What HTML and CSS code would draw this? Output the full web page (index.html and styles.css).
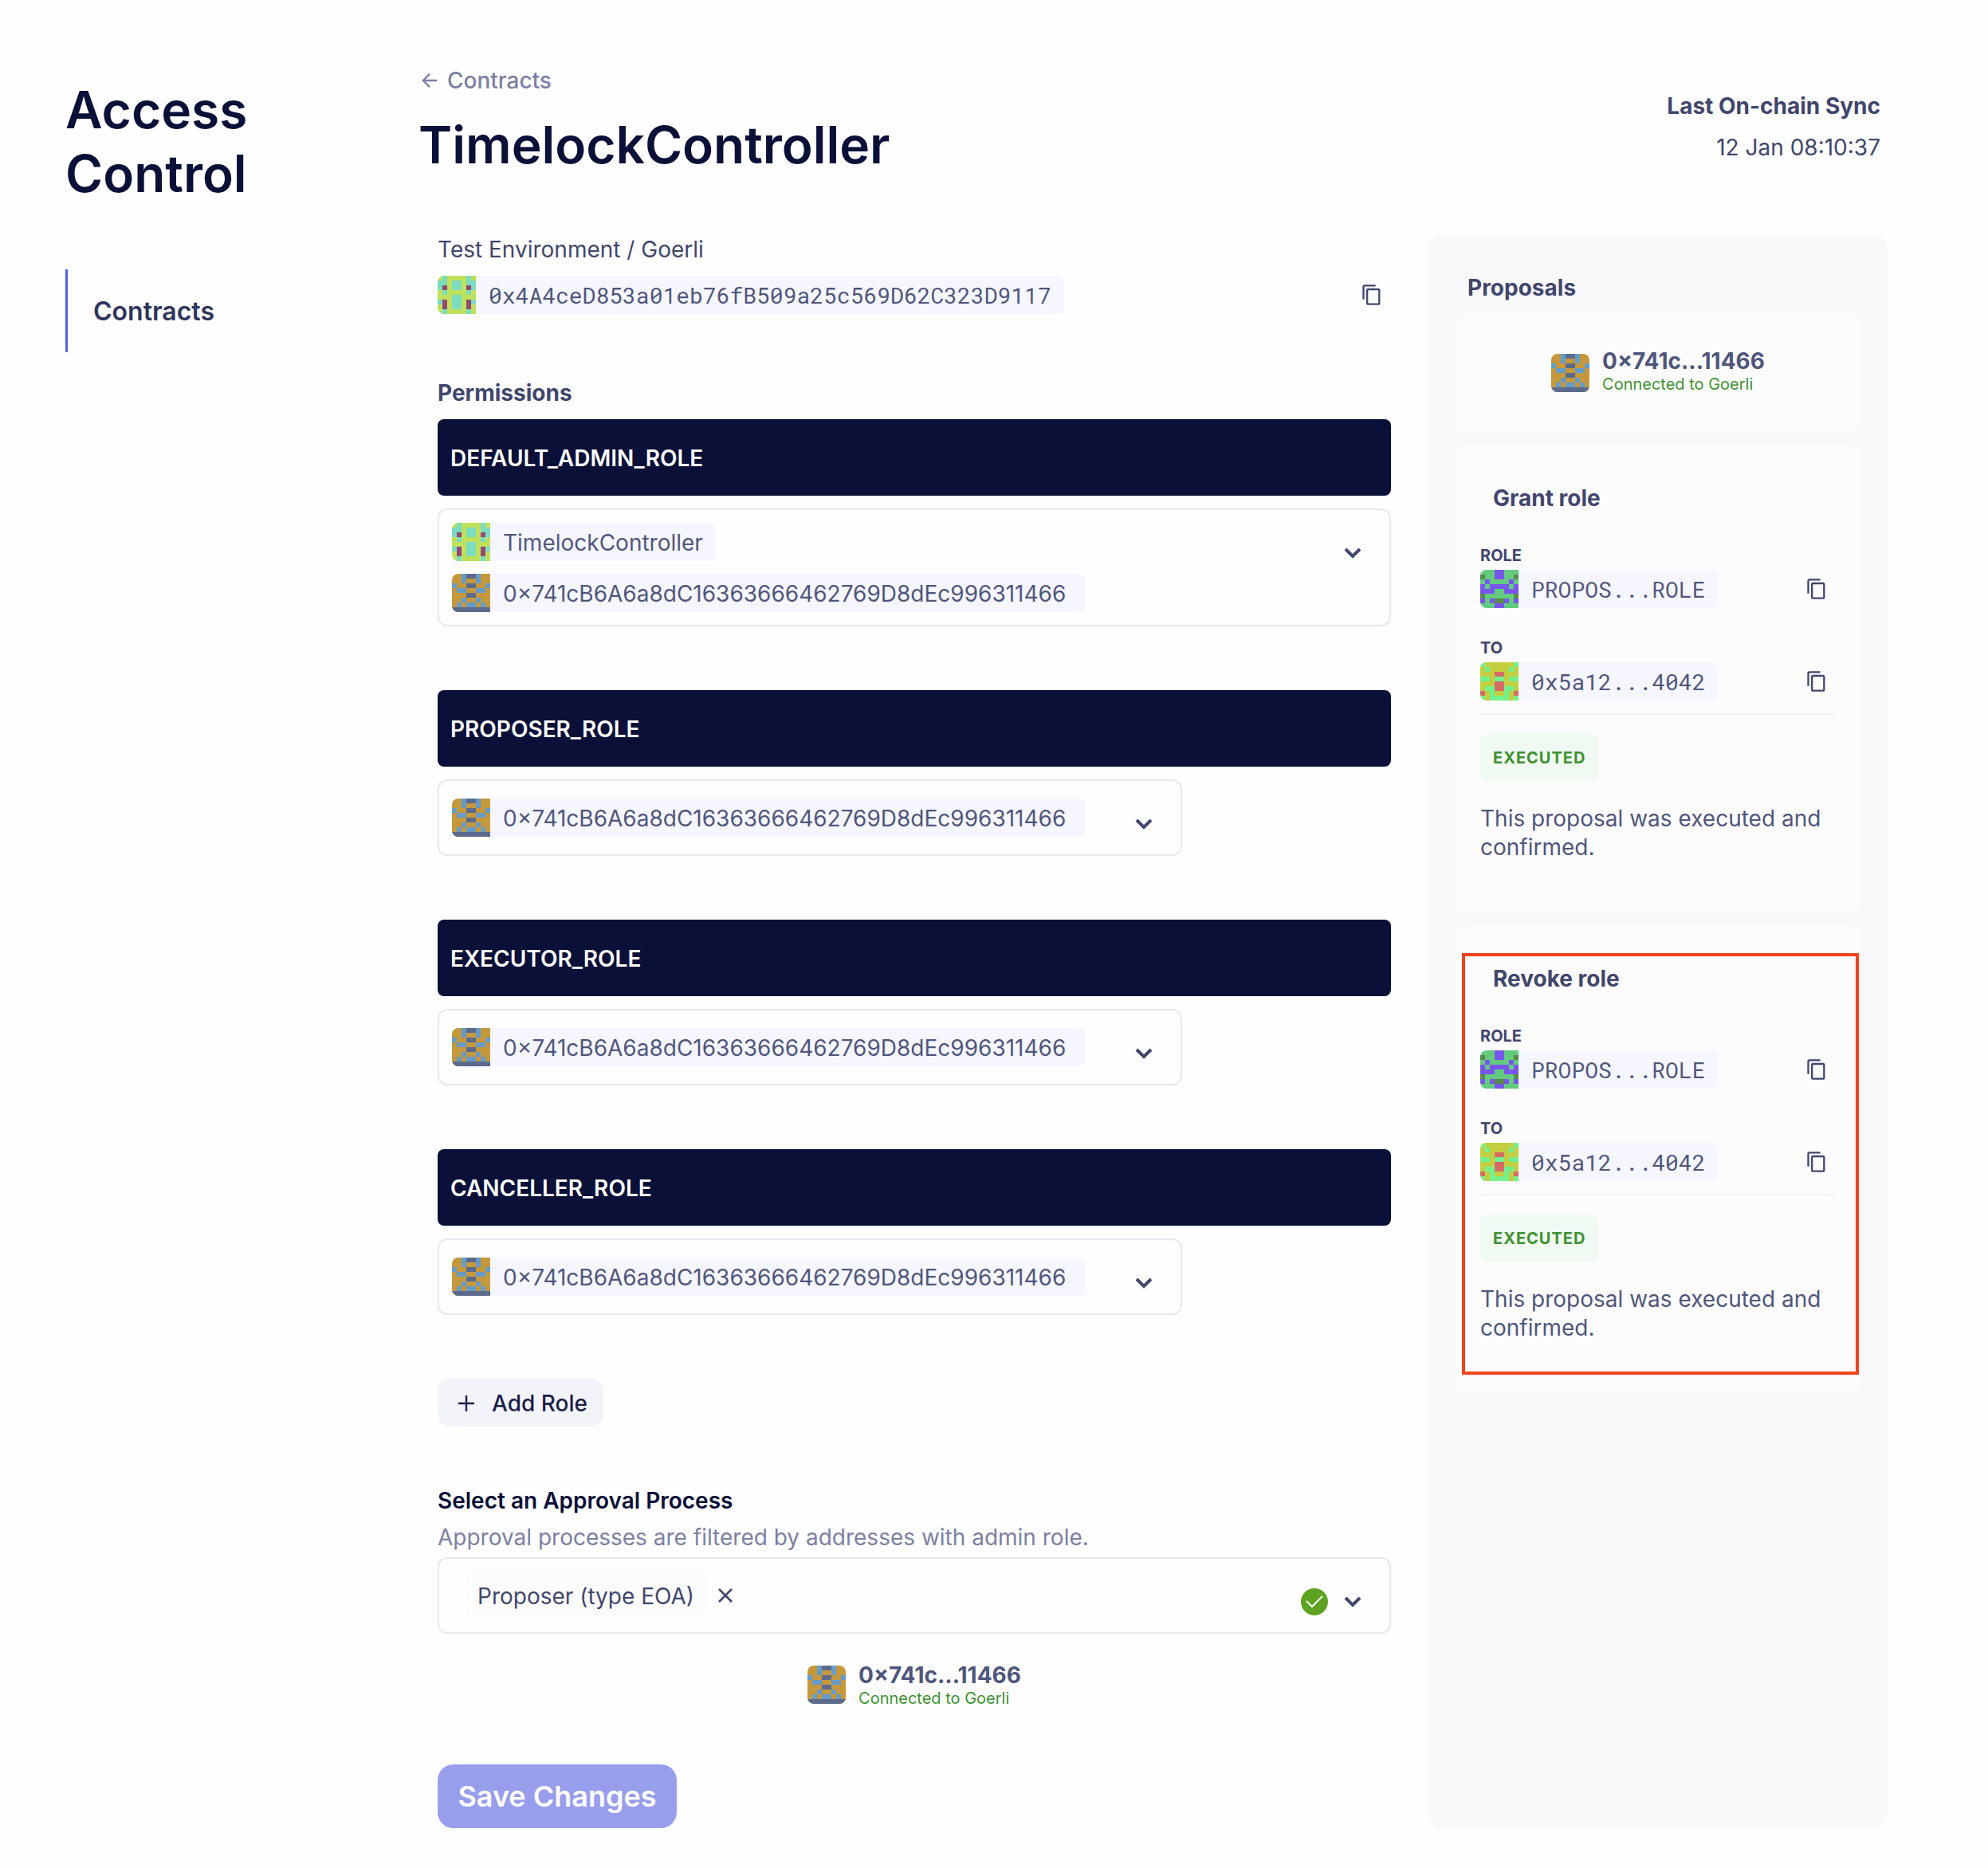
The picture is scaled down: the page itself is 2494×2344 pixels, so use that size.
FILE: index.html
```html
<!DOCTYPE html>
<html lang="en">
<head>
<meta charset="utf-8">
<title>Access Control – TimelockController</title>
<meta name="viewport" content="width=device-width, initial-scale=1">
<link rel="stylesheet" href="styles.css">
</head>
<body>
<svg class="sprite" aria-hidden="true">
  <symbol id="id-lime" viewBox="0 0 8 8">
    <path fill="#bfe15b" d="M0 0h8v8H0z"/>
    <path fill="#7bdcbf" d="M1 0h1v4h-1zM6 0h1v4h-1zM0 1h1v2h-1zM7 1h1v2h-1zM3 1h2v2h-2zM3 4h2v3h-2zM0 5h1v1h-1zM7 5h1v1h-1zM1 7h1v1h-1zM6 7h1v1h-1z"/>
    <path fill="#934773" d="M1 2h1v1h-1zM6 2h1v1h-1zM1 5h1v2h-1zM6 5h1v2h-1z"/>
  </symbol>
  <symbol id="id-amber" viewBox="0 0 8 8">
    <path fill="#c6983c" d="M0 0h8v8H0z"/>
    <path fill="#659bc7" d="M2 0h1v2h-1zM5 0h1v2h-1zM0 2h1v1h-1zM7 2h1v1h-1zM1 3h2v1h-2zM5 3h2v1h-2zM2 5h1v1h-1zM5 5h1v1h-1zM1 6h1v1h-1zM3 6h2v1h-2zM6 6h1v1h-1z"/>
    <path fill="#5c6b8c" d="M3 0h2v1h-2zM3 2h2v1h-2zM3 4h2v1h-2zM0 7h8v1h-8z"/>
  </symbol>
  <symbol id="id-violet" viewBox="0 0 8 8">
    <path fill="#63cb80" d="M0 0h8v8H0z"/>
    <path fill="#7856ec" d="M3 0h2v2h-2zM1 2h1v1h-1zM6 2h1v1h-1zM0 3h1v1h-1zM2 3h4v1h-4zM7 3h1v1h-1zM0 4h3v1h-3zM5 4h3v1h-3zM0 6h1v1h-1zM2 6h1v1h-1zM5 6h1v1h-1zM7 6h1v1h-1zM3 7h2v1h-2z"/>
    <path fill="#578a4b" d="M0 1h1v1h-1zM7 1h1v1h-1zM0 5h1v1h-1zM7 5h1v1h-1zM3 6h2v1h-2z"/>
  </symbol>
  <symbol id="id-olive" viewBox="0 0 8 8">
    <path fill="#c3cf40" d="M0 0h8v8H0z"/>
    <path fill="#74f08d" d="M0 0h1v1h-1zM7 0h1v1h-1zM1 1h1v1h-1zM6 1h1v1h-1zM0 3h2v1h-2zM3 3h2v1h-2zM6 3h2v1h-2zM1 5h2v1h-2zM5 5h2v1h-2zM2 6h1v1h-1zM5 6h1v1h-1zM0 7h1v1h-1zM2 7h4v1h-4zM7 7h1v1h-1z"/>
    <path fill="#d56b64" d="M3 2h2v1h-2zM3 4h2v2h-2zM0 6h1v1h-1zM7 6h1v1h-1z"/>
  </symbol>
  <symbol id="copy" viewBox="0 0 24 24">
    <path fill="currentColor" d="M16 1H4c-1.1 0-2 .9-2 2v14h2V3h12V1zm3 4H8c-1.1 0-2 .9-2 2v14c0 1.1.9 2 2 2h11c1.1 0 2-.9 2-2V7c0-1.1-.9-2-2-2zm0 16H8V7h11v14z"/>
  </symbol>
  <symbol id="chevron" viewBox="0 0 24 16">
    <path fill="none" stroke="currentColor" stroke-width="4" d="M3 3l9 9 9-9"/>
  </symbol>
</svg>

<div class="page">
  <aside class="sidebar">
    <h2 class="title">Access<br>Control</h2>
    <nav class="side-nav">
      <a class="side-link" href="#contracts">Contracts</a>
    </nav>
  </aside>

  <main class="main">
    <header class="header">
      <div class="heading">
        <a class="back" href="#contracts">
          <svg class="back-icon" viewBox="0 0 22 22" aria-hidden="true"><path fill="none" stroke="currentColor" stroke-width="2.6" d="M21 11H3M11 2l-9 9 9 9"/></svg>
          Contracts
        </a>
        <h1 class="title">TimelockController</h1>
      </div>
      <div class="sync">
        <strong>Last On-chain Sync</strong>
        <span>12 Jan 08:10:37</span>
      </div>
    </header>

    <div class="columns">
      <div class="details">
        <section class="contract">
          <p class="environment">Test Environment / Goerli</p>
          <div class="row">
            <span class="chip mono"><svg class="identicon"><use href="#id-lime"/></svg><span class="chip-text">0x4A4ceD853a01eb76fB509a25c569D62C323D9117</span></span>
            <button class="icon-button" type="button" aria-label="Copy address"><svg class="copy"><use href="#copy"/></svg></button>
          </div>
        </section>

        <section class="permissions">
          <div class="role">
            <h2 class="section-title">Permissions</h2>
            <h3 class="role-name">DEFAULT_ADMIN_ROLE</h3>
            <div class="field">
              <div class="chips">
                <span class="chip"><svg class="identicon"><use href="#id-lime"/></svg><span class="chip-text">TimelockController</span></span>
                <span class="chip address"><svg class="identicon"><use href="#id-amber"/></svg><span class="chip-text">0×741cB6A6a8dC16363666462769D8dEc996311466</span></span>
              </div>
              <button class="chevron-button" type="button" aria-label="Edit DEFAULT_ADMIN_ROLE members"><svg class="chevron"><use href="#chevron"/></svg></button>
            </div>
          </div>
          <div class="role">
            <h3 class="role-name">PROPOSER_ROLE</h3>
            <div class="field field-single">
              <span class="chip address"><svg class="identicon"><use href="#id-amber"/></svg><span class="chip-text">0×741cB6A6a8dC16363666462769D8dEc996311466</span></span>
              <button class="chevron-button" type="button" aria-label="Edit PROPOSER_ROLE members"><svg class="chevron"><use href="#chevron"/></svg></button>
            </div>
          </div>
          <div class="role">
            <h3 class="role-name">EXECUTOR_ROLE</h3>
            <div class="field field-single">
              <span class="chip address"><svg class="identicon"><use href="#id-amber"/></svg><span class="chip-text">0×741cB6A6a8dC16363666462769D8dEc996311466</span></span>
              <button class="chevron-button" type="button" aria-label="Edit EXECUTOR_ROLE members"><svg class="chevron"><use href="#chevron"/></svg></button>
            </div>
          </div>
          <div class="role">
            <h3 class="role-name">CANCELLER_ROLE</h3>
            <div class="field field-single">
              <span class="chip address"><svg class="identicon"><use href="#id-amber"/></svg><span class="chip-text">0×741cB6A6a8dC16363666462769D8dEc996311466</span></span>
              <button class="chevron-button" type="button" aria-label="Edit CANCELLER_ROLE members"><svg class="chevron"><use href="#chevron"/></svg></button>
            </div>
          </div>
          <button class="add-role" type="button">
            <svg class="plus" viewBox="0 0 20 20" aria-hidden="true"><path fill="none" stroke="currentColor" stroke-width="2.4" d="M10 0v20M0 10h20"/></svg>
            Add Role
          </button>
        </section>

        <section class="approval">
          <label class="approval-label" for="approval">Select an Approval Process</label>
          <p class="hint" id="approval-hint">Approval processes are filtered by addresses with admin role.</p>
          <div class="field field-approval">
            <div class="selection">
              <select class="tag" id="approval" aria-describedby="approval-hint">
                <option>Proposer (type EOA)</option>
              </select>
              <button class="clear" type="button" aria-label="Clear selection"><svg class="cross" viewBox="0 0 20 20"><path fill="none" stroke="currentColor" stroke-width="2.6" d="M2 2l16 16M18 2L2 18"/></svg></button>
            </div>
            <svg class="check" viewBox="0 0 34 34" aria-hidden="true"><circle cx="17" cy="17" r="17" fill="#5da220"/><path fill="none" stroke="#fff" stroke-width="2" d="M7 16l7 7L27 10"/></svg>
            <button class="chevron-button" type="button" aria-label="Show approval processes"><svg class="chevron"><use href="#chevron"/></svg></button>
          </div>
        </section>

        <div class="wallet wallet-main">
          <svg class="identicon"><use href="#id-amber"/></svg>
          <div>
            <strong class="wallet-name">0×741c...11466</strong>
            <span class="wallet-status">Connected to Goerli</span>
          </div>
        </div>

        <button class="save" type="button">Save Changes</button>
      </div>

      <aside class="proposals">
        <h2 class="section-title inset">Proposals</h2>
        <div class="card card-wallet">
          <div class="wallet">
            <svg class="identicon"><use href="#id-amber"/></svg>
            <div>
              <strong class="wallet-name">0×741c...11466</strong>
              <span class="wallet-status">Connected to Goerli</span>
            </div>
          </div>
        </div>

        <article class="card proposal">
          <h3 class="section-title inset">Grant role</h3>
          <div class="params">
            <div class="param">
              <h4 class="param-name">ROLE</h4>
              <div class="row">
                <span class="chip mono"><svg class="identicon"><use href="#id-violet"/></svg><span class="chip-text">PROPOS...ROLE</span></span>
                <button class="icon-button" type="button" aria-label="Copy role"><svg class="copy"><use href="#copy"/></svg></button>
              </div>
            </div>
            <div class="param">
              <h4 class="param-name">TO</h4>
              <div class="row">
                <span class="chip mono"><svg class="identicon"><use href="#id-olive"/></svg><span class="chip-text">0x5a12...4042</span></span>
                <button class="icon-button" type="button" aria-label="Copy address"><svg class="copy"><use href="#copy"/></svg></button>
              </div>
            </div>
          </div>
          <div class="outcome">
            <span class="badge">EXECUTED</span>
            <p class="message">This proposal was executed and confirmed.</p>
          </div>
        </article>

        <article class="card proposal highlighted">
          <h3 class="section-title inset">Revoke role</h3>
          <div class="params">
            <div class="param">
              <h4 class="param-name">ROLE</h4>
              <div class="row">
                <span class="chip mono"><svg class="identicon"><use href="#id-violet"/></svg><span class="chip-text">PROPOS...ROLE</span></span>
                <button class="icon-button" type="button" aria-label="Copy role"><svg class="copy"><use href="#copy"/></svg></button>
              </div>
            </div>
            <div class="param">
              <h4 class="param-name">TO</h4>
              <div class="row">
                <span class="chip mono"><svg class="identicon"><use href="#id-olive"/></svg><span class="chip-text">0x5a12...4042</span></span>
                <button class="icon-button" type="button" aria-label="Copy address"><svg class="copy"><use href="#copy"/></svg></button>
              </div>
            </div>
          </div>
          <div class="outcome">
            <span class="badge">EXECUTED</span>
            <p class="message">This proposal was executed and confirmed.</p>
          </div>
        </article>
      </aside>
    </div>
  </main>
</div>
</body>
</html>
```
FILE: styles.css
```css
:root {
  --ink: #0a1037;
  --text: #41466c;
  --soft: #50567b;
  --muted: #7c80a3;
  --line: #e8e8ef;
  --chip: #f6f6ff;
  --green: #3f9132;
}

* {
  box-sizing: border-box;
}

body {
  margin: 0;
  background: #fefefe;
  color: var(--text);
  font: 400 28px/36px Inter, "Liberation Sans", sans-serif;
}

h1, h2, h3, h4, p {
  margin: 0;
}

a {
  color: inherit;
  text-decoration: none;
}

button, select {
  margin: 0;
  padding: 0;
  border: 0;
  background: none;
  color: inherit;
  font: inherit;
  cursor: pointer;
}

svg {
  display: block;
  flex: none;
}

.sprite {
  position: absolute;
  width: 0;
  height: 0;
}

.page {
  display: grid;
  grid-template-columns: 443px minmax(0, 1fr);
  padding: 83px 127px 50px 82px;
}

.title {
  color: var(--ink);
  font-size: 64px;
  font-weight: 600;
  line-height: 80px;
}

/* Sidebar */

.sidebar {
  padding-top: 15px;
}

.side-nav {
  margin-top: 80px;
}

.side-link {
  display: block;
  padding: 33px 32px 31px;
  border-left: 3px solid #4f63dd;
  color: #30355c;
  font-size: 32px;
  font-weight: 600;
  line-height: 40px;
}

/* Page header */

.header {
  display: flex;
  justify-content: space-between;
  align-items: flex-start;
  margin-bottom: 72px;
}

.heading {
  display: flex;
  flex-direction: column;
  gap: 23px;
}

.back {
  display: flex;
  align-items: center;
  gap: 12px;
  padding-left: 4px;
  color: var(--muted);
  font-weight: 500;
}

.back-icon {
  width: 20px;
  height: 20px;
}

.sync {
  display: flex;
  flex-direction: column;
  align-items: flex-end;
  gap: 16px;
  padding: 32px 8px 0 0;
}

.columns {
  display: grid;
  grid-template-columns: minmax(0, 1fr) 574px;
  gap: 48px;
  padding-left: 24px;
}

.section-title {
  padding-top: 2px;
  color: var(--text);
  font-size: 28px;
  font-weight: 700;
  line-height: 34px;
}

.inset {
  padding-left: 16px;
}

/* Shared pieces */

.row {
  display: flex;
  justify-content: space-between;
  align-items: center;
}

.identicon {
  width: 48px;
  height: 48px;
  shape-rendering: crispEdges;
}

.chip {
  display: flex;
  align-items: center;
  width: fit-content;
  height: 48px;
  overflow: hidden;
  border-radius: 8px;
  background: var(--chip);
  color: var(--soft);
}

.chip-text {
  padding: 2px 16px 0;
}

.address {
  min-width: 795px;
}

.mono {
  font-family: "Roboto Mono", "Liberation Mono", monospace;
}

.icon-button {
  padding: 10px;
}

.copy {
  width: 28px;
  height: 28px;
}

.chevron-button {
  padding: 4px;
}

.chevron {
  width: 24px;
  height: 16px;
}

/* Contract details */

.details {
  display: flex;
  flex-direction: column;
}

.contract {
  display: flex;
  flex-direction: column;
  gap: 16px;
  margin-bottom: 80px;
}

.environment {
  padding-top: 2px;
  line-height: 34px;
}

.permissions {
  display: flex;
  flex-direction: column;
  align-items: flex-start;
  gap: 80px;
}

.role {
  display: flex;
  flex-direction: column;
  gap: 16px;
  width: 100%;
}

.role-name {
  padding: 31px 16px 29px;
  border-radius: 8px;
  background: var(--ink);
  color: #fff;
  font-size: 28px;
  font-weight: 600;
}

.field {
  display: flex;
  justify-content: space-between;
  align-items: flex-start;
  padding: 16px 30px 16px 16px;
  border: 2px solid var(--line);
  border-radius: 12px;
}

.field .chevron-button {
  margin-top: 26px;
}

.field-single {
  gap: 57px;
  width: fit-content;
  padding-top: 0;
  padding-bottom: 0;
  height: 96px;
}

.field-single .chip {
  margin-top: 22px;
}

.field-single .chevron-button {
  margin-top: 42px;
}

.chips {
  display: flex;
  flex-direction: column;
  gap: 16px;
}

.add-role {
  display: flex;
  align-items: center;
  gap: 22px;
  padding: 13px 20px 11px 26px;
  border-radius: 16px;
  background: #f3f4f9;
  color: #1a1f47;
  font-weight: 500;
}

.plus {
  width: 20px;
  height: 20px;
}

/* Approval process */

.approval {
  display: flex;
  flex-direction: column;
  gap: 8px;
  margin-top: 76px;
}

.approval-label {
  padding-bottom: 2px;
  color: var(--ink);
  font-weight: 600;
  line-height: 34px;
}

.hint {
  padding-top: 2px;
  color: var(--muted);
  line-height: 34px;
}

.field-approval {
  padding-top: 14px;
  padding-bottom: 14px;
  padding-left: 32px;
}

.selection {
  display: flex;
  align-items: center;
  gap: 12px;
  margin-right: auto;
}

.tag {
  height: 64px;
  padding: 2px 16px 0;
  border-radius: 8px;
  background: #fcfcfc;
  appearance: none;
}

.clear {
  height: 20px;
}

.cross {
  width: 20px;
  height: 20px;
}

.check {
  width: 34px;
  height: 34px;
  margin: 23px 15px 0 0;
}

.field-approval .chevron-button {
  margin-top: 28px;
}

/* Connected wallet */

.wallet {
  display: flex;
  justify-content: center;
  align-items: flex-end;
  gap: 16px;
}

.wallet .identicon {
  border-radius: 8px;
}

.wallet-name {
  display: block;
  color: var(--soft);
  font-weight: 700;
  line-height: 34px;
}

.wallet-status {
  display: block;
  color: var(--green);
  font-size: 20px;
  line-height: 24px;
}

.wallet-main {
  align-items: center;
  margin: 35px 0 71px;
}

.save {
  align-self: flex-start;
  min-width: 300px;
  padding: 16px 24px;
  border-radius: 20px;
  background: #989eec;
  color: #fff;
  font-size: 36px;
  font-weight: 600;
  line-height: 48px;
}

/* Proposals */

.proposals {
  display: flex;
  flex-direction: column;
  gap: 16px;
  padding: 48px 32px;
  border-radius: 16px;
  background: #f9f9fc;
}

.card {
  border-radius: 16px;
  background: #fcfcfd;
}

.card-wallet {
  padding: 42px 0 48px;
}

.card-wallet .identicon {
  margin-bottom: 2px;
}

.proposal {
  position: relative;
  padding: 48px 32px 64px;
}

.params {
  display: flex;
  flex-direction: column;
  gap: 36px;
  margin-top: 41px;
  padding-bottom: 16px;
  border-bottom: 2px solid #f3f3f7;
}

.param {
  display: flex;
  flex-direction: column;
  gap: 4px;
}

.param-name {
  font-size: 20px;
  font-weight: 700;
  line-height: 28px;
}

.outcome {
  display: flex;
  flex-direction: column;
  align-items: flex-start;
  gap: 28px;
  padding-top: 24px;
}

.badge {
  padding: 12px 16px;
  border-radius: 8px;
  background: #f0faf2;
  color: var(--green);
  font-size: 20px;
  font-weight: 700;
  letter-spacing: 1px;
}

.message {
  color: var(--soft);
}

.highlighted::after {
  content: "";
  position: absolute;
  inset: 35px 3px 23px 9px;
  border: 4px solid #f0431b;
  pointer-events: none;
}
```
